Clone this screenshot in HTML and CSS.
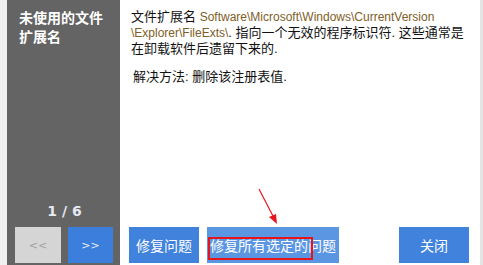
FILE: index.html
```html
<!DOCTYPE html>
<html>
<head>
<meta charset="utf-8">
<link rel="stylesheet" href="styles.css">
</head>
<body>
<div class="app">
  <div class="gutter"></div>
  <aside class="side">
    <div class="title">
      <div class="tline">未使用的文件</div>
      <div class="tline">扩展名</div>
    </div>
    <div class="spacer"></div>
    <div class="pager">1 / 6</div>
    <div class="nav">
      <button class="btn prev">&lt;&lt;</button>
      <button class="btn next">&gt;&gt;</button>
    </div>
  </aside>
  <main class="main">
    <div class="desc">
      <p class="line">文件扩展名 <span class="path">Software\Microsoft\Windows\CurrentVersion</span></p>
      <p class="line"><span class="path">\Explorer\FileExts\</span>. 指向一个无效的程序标识符. 这些通常是</p>
      <p class="line">在卸载软件后遗留下来的.</p>
      <p class="line fix">解决方法: 删除该注册表值.</p>
    </div>
    <div class="spacer"></div>
    <div class="actions">
      <button class="btn blue fix1">修复问题</button>
      <button class="btn light fixall">修复所有选定的问题</button>
      <div class="grow"></div>
      <button class="btn blue close">关闭</button>
    </div>
    <div class="mark"></div>
    <svg class="arrow" width="40" height="50" viewBox="0 0 40 50">
      <line x1="3" y1="2" x2="18" y2="31" stroke="#e8141c" stroke-width="1.2"/>
      <polygon points="21,37 13,30 20,27" fill="#e8141c"/>
    </svg>
  </main>
  <div class="edge"></div>
</div>
</body>
</html>
```

FILE: styles.css
```css
html, body {
  margin: 0;
  padding: 0;
  background: #f0f0f0;
}
body {
  font-family: "Liberation Sans", "Noto Sans CJK SC", sans-serif;
}
.app {
  display: flex;
  width: 483px;
  height: 265px;
}
.gutter {
  width: 7px;
  background: #f0f0f0;
}
.side {
  width: 113px;
  background: #646464;
  display: flex;
  flex-direction: column;
  box-sizing: border-box;
  padding: 8px 0 2px 8px;
}
.title {
  color: #ffffff;
  font-family: "Noto Sans CJK SC", sans-serif;
  font-weight: bold;
  font-size: 14px;
  padding-left: 4px;
}
.tline {
  line-height: 19px;
}
.spacer {
  flex: 1;
}
.pager {
  color: #e6e8f2;
  font-family: "DejaVu Sans", sans-serif;
  font-weight: bold;
  font-size: 14px;
  text-align: center;
  padding-right: 6px;
  line-height: 16px;
  margin-bottom: 8px;
}
.nav {
  display: flex;
  gap: 7px;
}
.btn {
  border: none;
  margin: 0;
  padding: 0;
  height: 36px;
  font-family: "Noto Sans CJK SC", sans-serif;
  font-size: 14px;
  color: #ffffff;
  cursor: default;
}
.prev {
  width: 46px;
  background: #d5d5d5;
  color: #a0a0a0;
  font-family: "DejaVu Sans", sans-serif;
  font-size: 11px;
}
.next {
  width: 45px;
  background: #3c7edb;
  color: #e8eefa;
  font-family: "DejaVu Sans", sans-serif;
  font-size: 11px;
}
.main {
  position: relative;
  width: 360px;
  background: #ffffff;
  display: flex;
  flex-direction: column;
  box-sizing: border-box;
  padding: 9px 0 2px 0;
}
.desc {
  padding-left: 11px;
  font-size: 13px;
  color: #111111;
}
.line {
  margin: 0;
  line-height: 15px;
  white-space: nowrap;
}
.path {
  font-family: "Liberation Sans", sans-serif;
  font-size: 12px;
  color: #7e5e26;
}
.fix {
  margin-top: 13px;
  padding-left: 2px;
}
.actions {
  display: flex;
  padding: 0 11px 0 9px;
  gap: 8px;
}
.grow {
  flex: 1;
}
.blue {
  background: #4183dc;
}
.light {
  background: #5b96e2;
}
.fix1 {
  width: 70px;
}
.fixall {
  width: 132px;
}
.close {
  width: 70px;
}
.mark {
  position: absolute;
  left: 88px;
  top: 237px;
  width: 101px;
  height: 19px;
  border: 2px solid #e8141c;
}
.arrow {
  position: absolute;
  left: 136px;
  top: 187px;
}
.edge {
  width: 3px;
  background: #e4e4e4;
}
```
